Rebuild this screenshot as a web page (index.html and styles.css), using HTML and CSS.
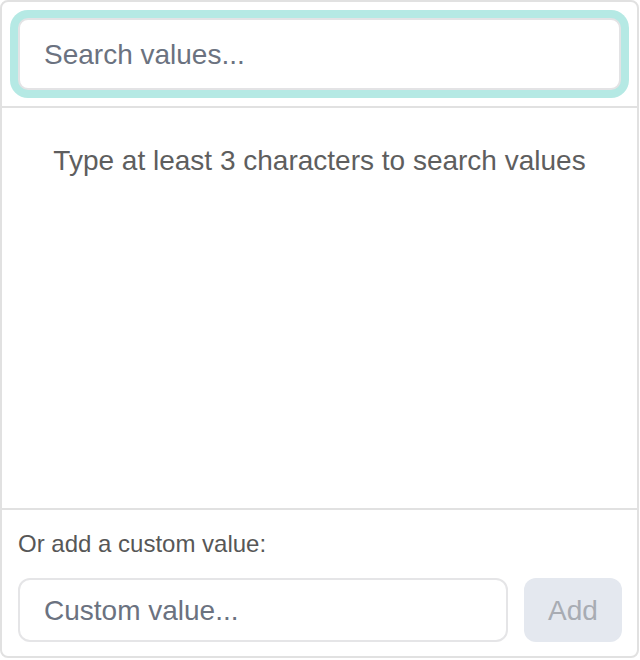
FILE: index.html
```html
<!DOCTYPE html>
<html lang="en">
<head>
<meta charset="utf-8">
<title>Value search</title>
<link rel="stylesheet" href="styles.css">
</head>
<body>
<div class="panel">
  <div class="search-bar">
    <input class="search-input" type="text" placeholder="Search values...">
  </div>
  <div class="results">
    <p class="hint">Type at least 3 characters to search values</p>
  </div>
  <div class="custom">
    <div class="custom-label">Or add a custom value:</div>
    <div class="custom-row">
      <input class="custom-input" type="text" placeholder="Custom value...">
      <button class="add-btn" type="button" disabled>Add</button>
    </div>
  </div>
</div>
</body>
</html>
```
FILE: styles.css
```css
* { box-sizing: border-box; }
html, body { margin: 0; padding: 0; background: #ffffff; }
body { font-family: "Liberation Sans", Arial, sans-serif; }

.panel {
  width: 639px;
  height: 658px;
  border: 2px solid #e1e1e1;
  border-radius: 8px;
  display: flex;
  flex-direction: column;
  overflow: hidden;
}

.search-bar {
  padding: 16px;
  border-bottom: 2px solid #e1e1e1;
}

.search-input {
  display: block;
  width: 100%;
  height: 72px;
  border: 2px solid #e3e3e5;
  border-radius: 10px;
  box-shadow: 0 0 0 8px #b5e9e4;
  padding: 2px 24px 0;
  font-family: inherit;
  font-size: 28px;
  color: #333;
  outline: none;
  background: #fff;
}
.search-input::placeholder { color: #6b7280; opacity: 1; }

.results {
  flex: 1;
  display: flex;
  justify-content: center;
}

.hint {
  margin: 0;
  padding-top: 37px;
  font-size: 28px;
  line-height: 32px;
  color: #5e5e5e;
  text-align: center;
}

.custom {
  border-top: 2px solid #e1e1e1;
  padding: 16px 15px 14px 16px;
  display: flex;
  flex-direction: column;
  gap: 16px;
}

.custom-label {
  font-size: 24px;
  line-height: 36px;
  color: #575757;
}

.custom-row {
  display: flex;
  gap: 16px;
}

.custom-input {
  flex: 1;
  min-width: 0;
  height: 64px;
  border: 2px solid #e5e5e7;
  border-radius: 12px;
  padding: 2px 24px 0;
  font-family: inherit;
  font-size: 28px;
  outline: none;
  background: #fff;
}
.custom-input::placeholder { color: #6b7280; opacity: 1; }

.add-btn {
  width: 98px;
  height: 64px;
  border: none;
  border-radius: 12px;
  background: #e4e8ef;
  color: #a8acb3;
  font-family: inherit;
  font-size: 28px;
  padding: 2px 0 0;
}
```
